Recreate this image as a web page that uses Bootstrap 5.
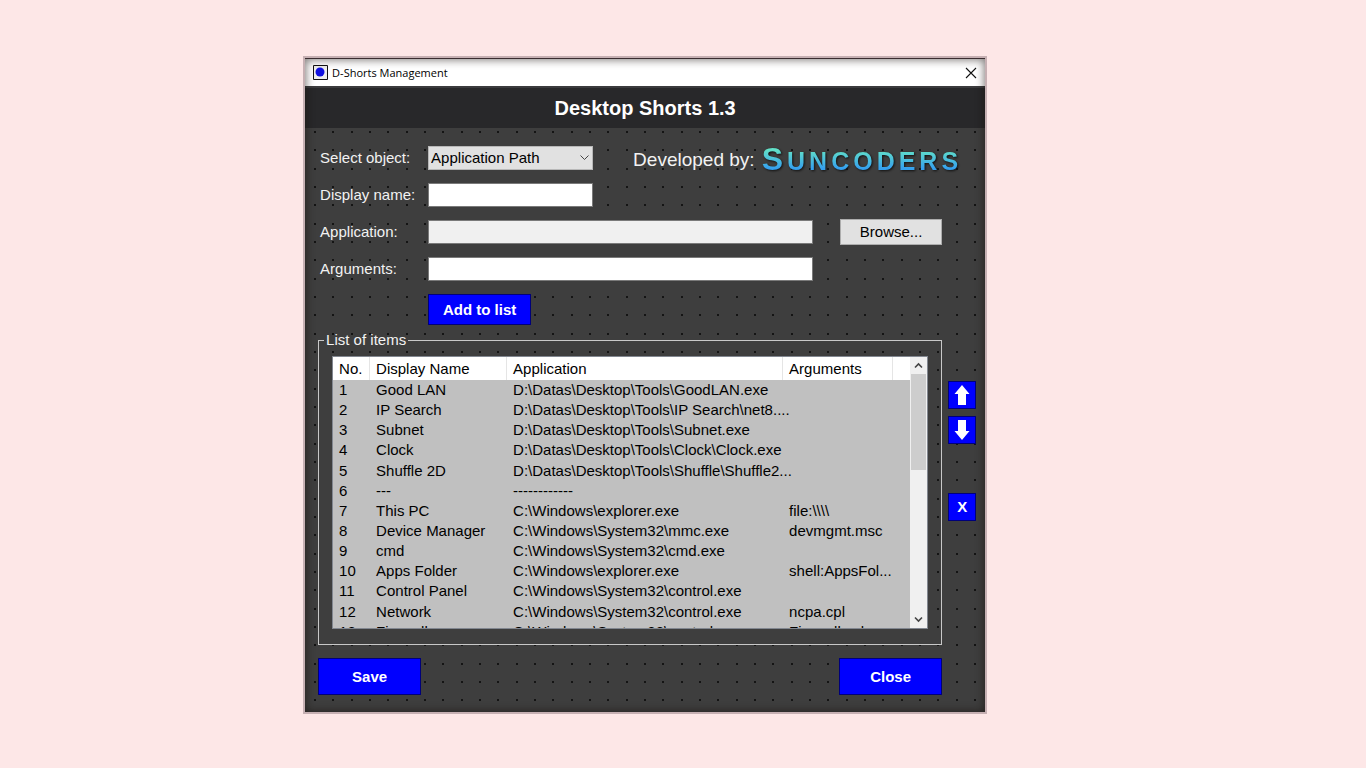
<!DOCTYPE html>
<html lang="en">
<head>
<meta charset="utf-8">
<meta name="viewport" content="width=device-width, initial-scale=1">
<title>D-Shorts Management</title>
<link href="https://cdn.jsdelivr.net/npm/bootstrap@5.3.0/dist/css/bootstrap.min.css" rel="stylesheet">
<style>
  body { background: #fde7e7; font-family: "Liberation Sans", Arial, sans-serif; font-size: 15px; line-height: 20px; color: #000; }
  .desk { display: grid; grid-template-columns: 4fr minmax(0, 684px) 5fr; padding: 56px 0 48px; }
  .win { grid-column: 2; border: 2px solid #c6b0b3; background: #3e3e3e; }
  .win-inner { position: relative; border-top: 1px solid #3a2c30; }
  .win-inner::after { content: ""; position: absolute; inset: 0; box-shadow: inset 0 0 9px 1px rgba(20, 12, 10, .55); pointer-events: none; }
  .titlebar { height: 27px; background: #fff; font: 11px/20px "Open Sans", "Noto Sans", sans-serif; padding: 0 8px; }
  .x-btn { border: 0; background: none; padding: 0; line-height: 0; }
  .banner { background: #28282a; border-top: 2px solid #3b3b3d; height: 42px; font-size: 20px; line-height: 24px; color: #fff; font-weight: 700; margin: 0; }
  .dotted { padding: 18px 9px 17px 13px;
    background: #3e3e3e url("data:image/svg+xml,%3Csvg xmlns='http://www.w3.org/2000/svg' width='55' height='55'%3E%3Cpath d='M9 4h2M27 4h2M46 4h2M9 22h2M27 22h2M46 22h2M9 41h2M27 41h2M46 41h2' stroke='%23141414' stroke-width='1.8'/%3E%3C/svg%3E"); }
  .form-rows { display: grid; grid-template-columns: 108px 165px 1fr 102px 20px; grid-template-rows: repeat(4, 24px) 31px; row-gap: 13px; padding: 0 14px 0 2px; align-items: center; }
  .form-rows label { grid-column: 1; }
  .form-rows label, .credit { color: #f2f2f2; }
  .ctl { height: 24px; width: 100%; border: 1px solid #7a7a7a; border-radius: 0; background: #fff; padding: 0 3px; color: #000; }
  input.ctl:read-only { background: #f0f0f0; }
  .pick { appearance: none; padding: 0 2px; border-color: #b8b8b8; background: #e1e1e1 url("data:image/svg+xml,%3Csvg xmlns='http://www.w3.org/2000/svg' width='9' height='6'%3E%3Cpath d='M.5 .5l4 4 4-4' fill='none' stroke='%23444'/%3E%3C/svg%3E") no-repeat right 3px center; }
  .wide { grid-column: 2 / 4; max-width: 385px; }
  .row-app { grid-row: 3; }
  .row-add { grid-area: 5 / 2; }
  .credit { font-size: 19px; line-height: 24px; grid-column: 3 / 6; padding-top: 3px; }
  .brand-mark { font-size: 25px; line-height: 32px; font-weight: 700; text-transform: uppercase; letter-spacing: 4px; text-decoration: none;
    background: linear-gradient(#62e0c8 20%, #35a0ee 75%); -webkit-background-clip: text; background-clip: text; color: transparent; filter: drop-shadow(1px 1px 1px #111); }
  .brand-mark::first-letter { font-size: 32px; }
  .browse { height: 26px; border: 1px solid #adadad; background: #e1e1e1; padding: 0; }
  .blue { background: #00f; color: #fff; border: 1px solid #00007a; font-weight: 700; padding: 0; border-radius: 0; }
  .act { width: 103px; height: 31px; }
  .tall { width: 103px; height: 37px; }
  .sq { width: 28px; height: 28px; line-height: 0; }
  .items-row { margin-top: 5px; }
  .items { border: 1px solid #c8c8c8; padding: 6px 13px 15px; }
  .items legend { float: none; width: auto; font-size: 15px; line-height: 20px; color: #f2f2f2; padding: 0 2px; margin: 0 0 0 -8px; }
  .listbox { height: 273px; border: 1px solid #828790; background: #c0c0c0; overflow: hidden; }
  .listbox table { table-layout: fixed; height: 285px; width: 100%; border-collapse: separate; border-spacing: 0; }
  .listbox th { background: #fff; font-weight: 400; height: 23px; border-right: 1px solid #e5e5e5; }
  .listbox th:last-child { border: 0; }
  .listbox th, .listbox td { padding: 0 0 0 6px; white-space: nowrap; }
  .c-no { width: 37px; }
  .c-name { width: 137px; }
  .c-app { width: 276px; }
  .c-args { width: 110px; }
  .bar { width: 17px; background: #f0f0f0; flex: none; }
  .thumb { height: 96px; margin: 0 1px; background: #cdcdcd; }
  .side { gap: 7px; padding: 51px 0 0 6px; }
  .last-sq { margin-top: 42px; }
  .foot { padding: 13px 34px 0 0; }
</style>
</head>
<body>
<main class="desk">
  <section class="win">
    <div class="win-inner">
      <header class="titlebar d-flex align-items-center justify-content-between">
        <div class="d-flex align-items-center gap-1">
          <svg width="15" height="15" viewBox="0 0 15 15"><path fill="#eee" stroke="#111" d="M.5 .5h14v14H.5z"/><circle cx="7" cy="7" r="4.5" fill="#1010e0"/></svg>
          <span>D-Shorts Management</span>
        </div>
        <button class="x-btn" aria-label="Close window"><svg width="12" height="12" viewBox="0 0 12 12"><path d="M1 1l10 10M11 1L1 11" stroke="#111" stroke-width="1.1"/></svg></button>
      </header>
      <h1 class="banner d-flex align-items-center justify-content-center">Desktop Shorts 1.3</h1>
      <div class="dotted">
        <form class="form-rows">
          <label for="obj">Select object:</label>
          <select id="obj" class="ctl pick"><option>Application Path</option></select>
          <div class="credit d-flex align-items-center justify-content-between ps-4"><span class="ps-3">Developed by:</span><a href="#" class="brand-mark">Suncoders</a></div>
          <label for="dname">Display name:</label>
          <input id="dname" class="ctl" type="text">
          <label for="app" class="row-app">Application:</label>
          <input id="app" class="ctl wide" type="text" readonly>
          <button type="button" class="browse">Browse...</button>
          <label for="args">Arguments:</label>
          <input id="args" class="ctl wide" type="text">
          <button type="button" class="blue act row-add">Add to list</button>
        </form>
        <div class="items-row d-flex">
          <fieldset class="items flex-grow-1">
            <legend>List of items</legend>
            <div class="listbox d-flex">
              <div class="flex-grow-1">
              <table>
                <colgroup><col class="c-no"><col class="c-name"><col class="c-app"><col class="c-args"><col></colgroup>
                <thead><tr><th>No.</th><th>Display Name</th><th>Application</th><th>Arguments</th><th></th></tr></thead>
                <tbody>
                  <tr><td>1</td><td>Good LAN</td><td>D:\Datas\Desktop\Tools\GoodLAN.exe</td><td></td><td></td></tr>
                  <tr><td>2</td><td>IP Search</td><td>D:\Datas\Desktop\Tools\IP Search\net8....</td><td></td><td></td></tr>
                  <tr><td>3</td><td>Subnet</td><td>D:\Datas\Desktop\Tools\Subnet.exe</td><td></td><td></td></tr>
                  <tr><td>4</td><td>Clock</td><td>D:\Datas\Desktop\Tools\Clock\Clock.exe</td><td></td><td></td></tr>
                  <tr><td>5</td><td>Shuffle 2D</td><td>D:\Datas\Desktop\Tools\Shuffle\Shuffle2...</td><td></td><td></td></tr>
                  <tr><td>6</td><td>---</td><td>------------</td><td></td><td></td></tr>
                  <tr><td>7</td><td>This PC</td><td>C:\Windows\explorer.exe</td><td>file:\\\\</td><td></td></tr>
                  <tr><td>8</td><td>Device Manager</td><td>C:\Windows\System32\mmc.exe</td><td>devmgmt.msc</td><td></td></tr>
                  <tr><td>9</td><td>cmd</td><td>C:\Windows\System32\cmd.exe</td><td></td><td></td></tr>
                  <tr><td>10</td><td>Apps Folder</td><td>C:\Windows\explorer.exe</td><td>shell:AppsFol...</td><td></td></tr>
                  <tr><td>11</td><td>Control Panel</td><td>C:\Windows\System32\control.exe</td><td></td><td></td></tr>
                  <tr><td>12</td><td>Network</td><td>C:\Windows\System32\control.exe</td><td>ncpa.cpl</td><td></td></tr>
                  <tr><td>13</td><td>Firewall</td><td>C:\Windows\System32\control.exe</td><td>Firewall.cpl</td><td></td></tr>
                </tbody>
              </table>
              </div>
              <div class="bar d-flex flex-column">
                <svg width="17" height="17" viewBox="0 0 17 17"><path d="M5 10.500l3.500-3.500 3.500 3.500" fill="none" stroke="#444" stroke-width="1.600"/></svg>
                <div class="thumb"></div>
                <svg class="mt-auto" width="17" height="17" viewBox="0 0 17 17"><path d="M5 6.500l3.500 3.500 3.500-3.500" fill="none" stroke="#444" stroke-width="1.600"/></svg>
              </div>
            </div>
          </fieldset>
          <div class="side d-flex flex-column">
            <button class="blue sq" aria-label="Move up"><svg width="16" height="22" viewBox="0 0 16 22"><path fill="#fff" d="M8 1l7.500 9H12v11H4V10H.5z"/></svg></button>
            <button class="blue sq" aria-label="Move down"><svg width="16" height="22" viewBox="0 0 16 22"><path fill="#fff" d="M8 21l7.500-9H12V1H4v11H.5z"/></svg></button>
            <button class="blue sq last-sq">X</button>
          </div>
        </div>
        <div class="foot d-flex justify-content-between">
          <button class="blue tall">Save</button>
          <button class="blue tall">Close</button>
        </div>
      </div>
    </div>
  </section>
</main>
<script src="https://cdn.jsdelivr.net/npm/bootstrap@5.3.0/dist/js/bootstrap.bundle.min.js"></script>
</body>
</html>
